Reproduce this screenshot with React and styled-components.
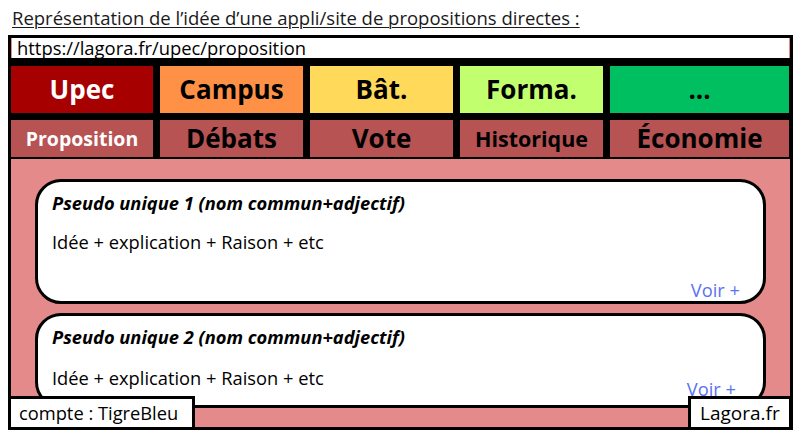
import React from "react";
import styled, { createGlobalStyle } from "styled-components";

const Global = createGlobalStyle`
  body {
    margin: 0;
    background: #fff;
    font-family: "Open Sans", "Noto Sans", sans-serif;
    color: #000;
  }
`;

const Page = styled.div`
  width: 800px;
  height: 437px;
  overflow: hidden;
`;

const Title = styled.h1`
  margin: 0;
  height: 35px;
  padding-left: 12px;
  font-size: 18.5px;
  font-weight: 400;
  line-height: 36px;
  color: #1a1a1a;
  white-space: nowrap;
  text-decoration: underline;
  text-underline-offset: 2px;
  text-decoration-thickness: 1px;
`;

const Frame = styled.div`
  position: relative;
  box-sizing: border-box;
  margin-left: 8px;
  width: 785px;
  height: 395px;
  border: 3px solid #000;
  background: #e48a8a;
  display: flex;
  flex-direction: column;
`;

const UrlBar = styled.div`
  height: 20px;
  margin: 0 1px;
  background: #fff;
  padding-left: 5px;
  font-size: 18.4px;
  line-height: 20px;
  white-space: nowrap;
`;

const Nav = styled.nav`
  background: #000;
  padding: 8px 1px 4px 0;
  display: flex;
  flex-direction: column;
  gap: 7px;
`;

const TabRow = styled.div`
  display: grid;
  grid-template-columns: 142px 143px 143px 143px 1fr;
  column-gap: 7px;
  height: ${(p) => p.$h}px;
`;

const Tab = styled.div`
  background: ${(p) => p.$bg};
  color: ${(p) => p.$fg || "#000"};
  font-weight: 700;
  font-size: ${(p) => p.$size || 26}px;
  white-space: nowrap;
  display: flex;
  align-items: center;
  justify-content: center;
  padding-bottom: 1px;
`;

const Content = styled.div`
  flex: 1;
  padding: 20px 24px 0 24px;
  display: flex;
  flex-direction: column;
  gap: 9px;
`;

const Card = styled.div`
  position: relative;
  box-sizing: border-box;
  height: ${(p) => p.$h}px;
  border: 3px solid #000;
  border-radius: 26px;
  background: #fff;
  padding: 10px 0 0 14px;
  flex-shrink: 0;
`;

const Pseudo = styled.div`
  font-size: 18.3px;
  font-weight: 700;
  font-style: italic;
  line-height: 22px;
`;

const Body = styled.div`
  margin-top: ${(p) => p.$gap}px;
  font-size: 18.3px;
  line-height: 22px;
`;

const More = styled.span`
  position: absolute;
  right: ${(p) => p.$right}px;
  bottom: ${(p) => p.$bottom}px;
  font-size: 18.3px;
  line-height: 22px;
  color: #5a72f5;
`;

const FootBox = styled.div`
  position: absolute;
  bottom: -3px;
  ${(p) => (p.$side === "left" ? "left: -3px;" : "right: -2px;")}
  box-sizing: border-box;
  width: ${(p) => p.$w}px;
  height: 34px;
  border: 3px solid #000;
  background: #fff;
  padding-left: ${(p) => p.$pad}px;
  font-size: ${(p) => p.$size}px;
  line-height: 28px;
  white-space: nowrap;
`;

const tabs = [
  { label: "Upec", bg: "#a60000", fg: "#fff" },
  { label: "Campus", bg: "#ff9147" },
  { label: "Bât.", bg: "#ffda5a" },
  { label: "Forma.", bg: "#c1ff6f" },
  { label: "...", bg: "#00bf60" },
];

const sections = [
  { label: "Proposition", fg: "#fff", size: 19.5 },
  { label: "Débats" },
  { label: "Vote" },
  { label: "Historique", size: 21.5 },
  { label: "Économie" },
];

const ideas = [
  { n: 1, h: 125, gap: 17, right: 23, bottom: 0 },
  { n: 2, h: 95, gap: 19, right: 27, bottom: 5 },
];

export default function App() {
  return (
    <Page>
      <Global />
      <Title>Représentation de l’idée d’une appli/site de propositions directes :</Title>
      <Frame>
        <UrlBar>https://lagora.fr/upec/proposition</UrlBar>
        <Nav>
          <TabRow $h={47}>
            {tabs.map((t) => (
              <Tab key={t.label} $bg={t.bg} $fg={t.fg}>
                {t.label}
              </Tab>
            ))}
          </TabRow>
          <TabRow $h={35}>
            {sections.map((s) => (
              <Tab key={s.label} $bg="#b75353" $fg={s.fg} $size={s.size}>
                {s.label}
              </Tab>
            ))}
          </TabRow>
        </Nav>
        <Content>
          {ideas.map((i) => (
            <Card key={i.n} $h={i.h}>
              <Pseudo>Pseudo unique {i.n} (nom commun+adjectif)</Pseudo>
              <Body $gap={i.gap}>Idée + explication + Raison + etc</Body>
              <More $right={i.right} $bottom={i.bottom}>Voir +</More>
            </Card>
          ))}
        </Content>
        <FootBox $side="left" $w={187} $pad={8} $size={18.3}>compte : TigreBleu</FootBox>
        <FootBox $side="right" $w={104} $pad={9} $size={19}>Lagora.fr</FootBox>
      </Frame>
    </Page>
  );
}
